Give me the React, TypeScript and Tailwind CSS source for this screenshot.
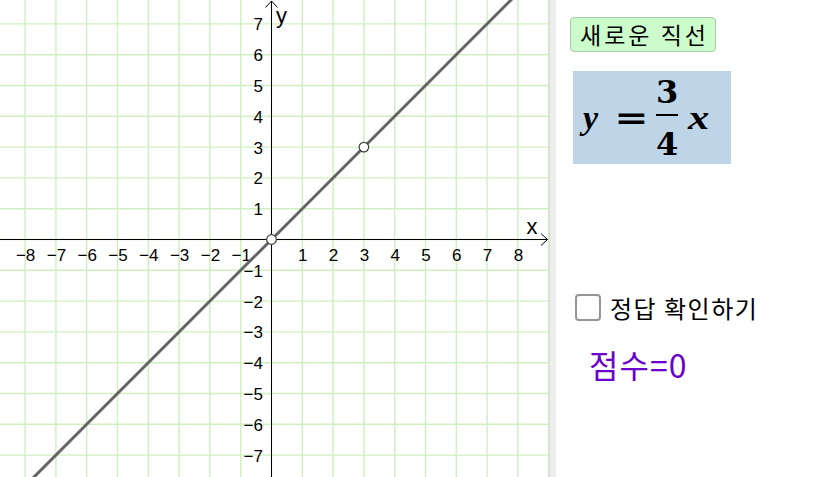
import React from "react";

const OX = 271.5;
const OY = 239.5;
const U = 30.8;
const W = 549;
const H = 477;

function Graph() {
  const xs: number[] = [];
  for (let k = -8; k <= 9; k++) xs.push(OX + k * U);
  const ys: number[] = [];
  for (let k = -8; k <= 8; k++) ys.push(OY - k * U);
  const sx = (v: number) => OX + v * U;
  const sy = (v: number) => OY - v * U;
  const minus = "\u2212";
  return (
    <svg width={W} height={H} viewBox={`0 0 ${W} ${H}`} className="block shrink-0">
      <rect x={0} y={0} width={W} height={H} fill="#ffffff" />
      <g stroke="#cfefc1" strokeWidth={1.4}>
        {xs.map((x, i) => (
          <line key={"gx" + i} x1={x} y1={0} x2={x} y2={H} />
        ))}
        {ys.map((y, i) => (
          <line key={"gy" + i} x1={0} y1={y} x2={W} y2={y} />
        ))}
      </g>
      <g stroke="#000" strokeWidth={1} fill="none">
        <line x1={0} y1={OY} x2={547.5} y2={OY} />
        <line x1={OX} y1={H} x2={OX} y2={1} />
        <polyline points={`541,${OY - 6} 547.5,${OY} 541,${OY + 6}`} />
        <polyline points={`${OX - 6},7.5 ${OX},1 ${OX + 6},7.5`} />
      </g>
      <g fill="#000" fontFamily='"Liberation Sans", Arial, sans-serif' fontSize={17}>
        {[-8, -7, -6, -5, -4, -3, -2, -1, 1, 2, 3, 4, 5, 6, 7, 8].map((k) => (
          <text key={"lx" + k} x={sx(k) + 0.5} y={260.5} textAnchor="middle">
            {k < 0 ? minus + Math.abs(k) : String(k)}
          </text>
        ))}
        {[-7, -6, -5, -4, -3, -2, -1, 1, 2, 3, 4, 5, 6, 7].map((k) => (
          <text key={"ly" + k} x={263} y={sy(k) + 6.5} textAnchor="end">
            {k < 0 ? minus + Math.abs(k) : String(k)}
          </text>
        ))}
      </g>
      <g fill="#000" fontFamily='"Liberation Sans", Arial, sans-serif' fontSize={22}>
        <text x={276} y={23}>y</text>
        <text x={526.5} y={234}>x</text>
      </g>
      <line x1={sx(-9)} y1={sy(-9)} x2={sx(9)} y2={sy(9)} stroke="#646464" strokeWidth={3} />
      <circle cx={sx(0)} cy={sy(0)} r={4.8} fill="#fff" stroke="#404040" strokeWidth={1.2} />
      <circle cx={sx(3)} cy={sy(3)} r={4.8} fill="#fff" stroke="#404040" strokeWidth={1.2} />
    </svg>
  );
}

const KR = '"Noto Sans CJK KR", "Noto Sans", sans-serif';

export default function App() {
  return (
    <div className="flex w-[821px] h-[477px] overflow-hidden bg-white">
      <Graph />
      <div className="w-[7px] shrink-0 h-full bg-[#eeeeee] border-l border-[#dcdcdc]" />
      <div className="flex flex-col items-start flex-1 h-full bg-white">
        <button
          className="mt-[17px] ml-[14px] w-[146px] h-[35px] rounded-[4px] border border-[#a9cba9] bg-[#ccfccc] flex items-center justify-center pl-[3px] text-[23px] tracking-[3px] text-black leading-none"
          style={{ fontFamily: KR }}
        >
          새로운 직선
        </button>
        <div className="mt-[19px] ml-[17px] w-[158px] h-[93px] bg-[#bed4e7] flex items-center pl-[10px] text-black">
          <span
            className="text-[34px] italic font-bold leading-none"
            style={{ fontFamily: '"Liberation Serif", serif' }}
          >
            y
          </span>
          <span
            className="ml-[20px] inline-block scale-x-[1.28] text-[32px] font-bold leading-none"
            style={{ fontFamily: '"DejaVu Serif", serif' }}
          >
            =
          </span>
          <span
            className="ml-[11px] flex flex-col items-center text-[32px] font-bold"
            style={{ fontFamily: '"DejaVu Serif", serif' }}
          >
            <span className="block h-[32px] leading-[32px]">3</span>
            <span className="block w-[22px] h-[2px] bg-black mt-[6px] mb-[12px]" />
            <span className="block h-[32px] leading-[32px]">4</span>
          </span>
          <span
            className="ml-[10px] inline-block origin-left scale-x-[1.25] text-[34px] italic font-bold leading-none"
            style={{ fontFamily: '"Liberation Serif", serif' }}
          >
            x
          </span>
        </div>
        <div className="mt-[130px] ml-[19px] flex items-center">
          <span className="w-[26px] h-[27px] rounded-[4px] border-2 border-[#959595] bg-white" />
          <span
            className="ml-[9px] text-[24px] tracking-[1.5px] text-black leading-none"
            style={{ fontFamily: KR }}
          >
            정답 확인하기
          </span>
        </div>
        <div
          className="mt-[27px] ml-[33px] text-[32px] tracking-[1px] leading-none text-[#6a00cc]"
          style={{ fontFamily: KR }}
        >
          점수=0
        </div>
      </div>
    </div>
  );
}
